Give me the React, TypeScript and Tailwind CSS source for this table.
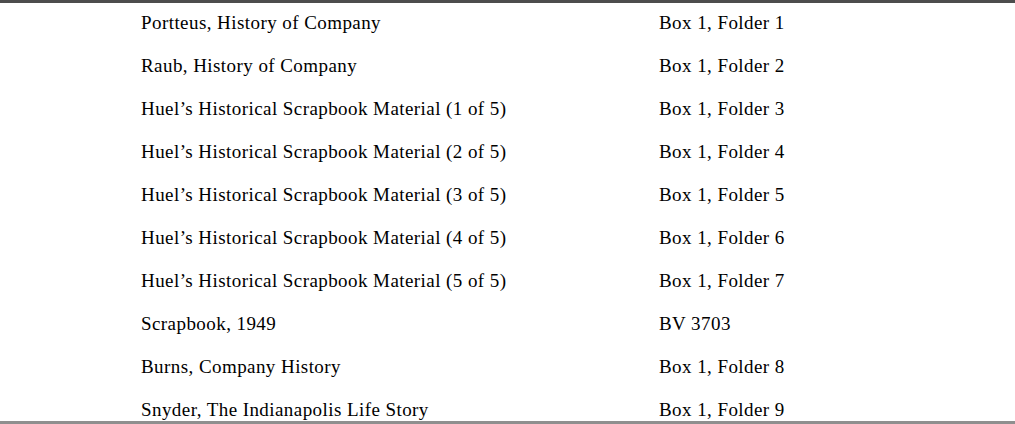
const rows: [string, string][] = [
  ["Portteus, History of Company", "Box 1, Folder 1"],
  ["Raub, History of Company", "Box 1, Folder 2"],
  ["Huel\u2019s Historical Scrapbook Material (1 of 5)", "Box 1, Folder 3"],
  ["Huel\u2019s Historical Scrapbook Material (2 of 5)", "Box 1, Folder 4"],
  ["Huel\u2019s Historical Scrapbook Material (3 of 5)", "Box 1, Folder 5"],
  ["Huel\u2019s Historical Scrapbook Material (4 of 5)", "Box 1, Folder 6"],
  ["Huel\u2019s Historical Scrapbook Material (5 of 5)", "Box 1, Folder 7"],
  ["Scrapbook, 1949", "BV 3703"],
  ["Burns, Company History", "Box 1, Folder 8"],
  ["Snyder, The Indianapolis Life Story", "Box 1, Folder 9"],
];

export default function App() {
  return (
    <div className="w-[1015px] h-[424px] overflow-hidden bg-white flex flex-col">
      <div className="h-[3px] bg-[#4d4d4d]" />
      <div className="flex-1 overflow-hidden pl-[141px] pt-[2px] font-['Liberation_Serif',serif] text-[19px] tracking-[0.43px] text-black">
        {rows.map(([title, loc]) => (
          <div key={title} className="grid grid-cols-[518px_1fr] h-[43px] items-start leading-[36px]">
            <span>{title}</span>
            <span>{loc}</span>
          </div>
        ))}
      </div>
      <div className="h-[3px] bg-[#8f8f8f]" />
    </div>
  );
}
